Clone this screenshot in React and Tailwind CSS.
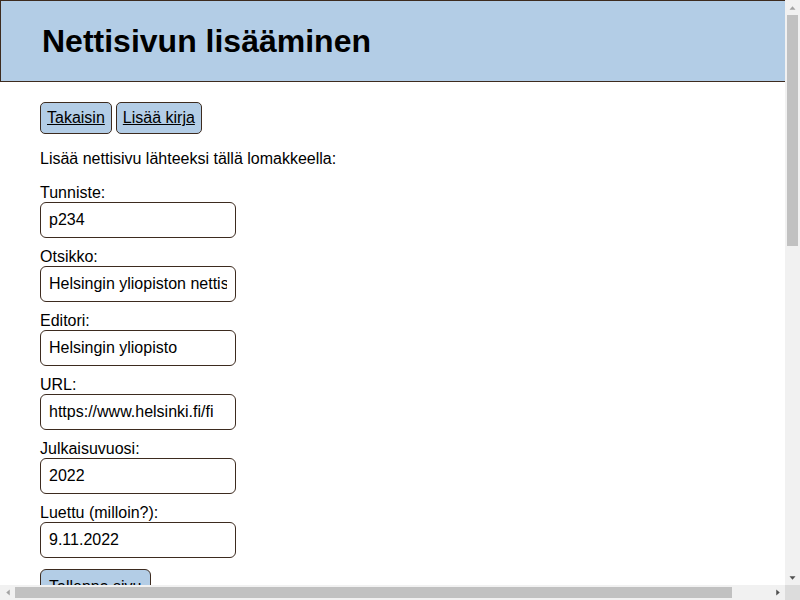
function Tri({ dir, color }) {
  const pts = {
    up: "0.5,4.5 3.5,1 6.5,4.5",
    down: "0.5,1 3.5,4.5 6.5,1",
    left: "4.5,0.5 1,3.5 4.5,6.5",
    right: "1,0.5 4.5,3.5 1,6.5",
  }[dir];
  const vert = dir === "up" || dir === "down";
  return (
    <svg width={vert ? 7 : 6} height={vert ? 6 : 7} viewBox={vert ? "0 0 7 5.5" : "0 0 5.5 7"}>
      <polygon points={pts} fill={color} />
    </svg>
  );
}

export default function App() {
  const fields = [
    ["Tunniste:", "p234"],
    ["Otsikko:", "Helsingin yliopiston nettisivut"],
    ["Editori:", "Helsingin yliopisto"],
    ["URL:", "https://www.helsinki.fi/fi"],
    ["Julkaisuvuosi:", "2022"],
    ["Luettu (milloin?):", "9.11.2022"],
  ];
  return (
    <div className="w-[800px] h-[600px] overflow-hidden grid grid-cols-[785px_15px] grid-rows-[585px_15px] font-['Liberation_Sans',Arial,sans-serif] text-black text-base bg-white">
      <div className="overflow-hidden">
        <div className="min-h-[1405px]">
          <header className="box-content w-full px-5 h-20 border border-[#3d2b1f] bg-[#b3cde6] flex items-center">
            <h1 className="ml-[21px] text-[32px] font-bold leading-[37px] whitespace-nowrap">Nettisivun lisääminen</h1>
          </header>
          <main className="px-10 pt-5">
            <div className="flex gap-1">
              <a href="#" className="block bg-[#b3cde6] border border-[#3d2b1f] rounded-[5px] px-[6px] py-[6px] leading-[18px] underline">Takaisin</a>
              <a href="#" className="block bg-[#b3cde6] border border-[#3d2b1f] rounded-[5px] px-[6px] py-[6px] leading-[18px] underline">Lisää kirja</a>
            </div>
            <p className="mt-4 leading-[18px]">Lisää nettisivu lähteeksi tällä lomakkeella:</p>
            <form className="mt-4 flex flex-col items-start" onSubmit={(e) => e.preventDefault()}>
              {fields.map(([label, value]) => (
                <div key={label} className="mb-[10px] flex flex-col">
                  <label className="block leading-[18px]">{label}</label>
                  <input
                    className="w-[196px] h-9 border border-[#3d2b1f] rounded-md px-2 text-base text-black bg-white outline-none"
                    defaultValue={value}
                  />
                </div>
              ))}
              <button className="mt-px bg-[#b3cde6] border border-[#3d2b1f] rounded-md px-2 py-2 leading-[18px]">Tallenna sivu</button>
            </form>
          </main>
        </div>
      </div>
      <div className="bg-[#f1f1f1] flex flex-col items-center">
        <div className="h-[15px] flex items-center justify-center"><Tri dir="up" color="#a3a3a3" /></div>
        <div className="w-[11px] h-[231px] bg-[#c1c1c1]" />
        <div className="flex-1" />
        <div className="h-[15px] flex items-center justify-center"><Tri dir="down" color="#505050" /></div>
      </div>
      <div className="bg-[#f1f1f1] flex items-center">
        <div className="w-[15px] flex items-center justify-center"><Tri dir="left" color="#a3a3a3" /></div>
        <div className="w-[717px] h-[11px] bg-[#c1c1c1]" />
        <div className="flex-1" />
        <div className="w-[15px] flex items-center justify-center"><Tri dir="right" color="#505050" /></div>
      </div>
      <div className="bg-[#dcdcdc]" />
    </div>
  );
}
